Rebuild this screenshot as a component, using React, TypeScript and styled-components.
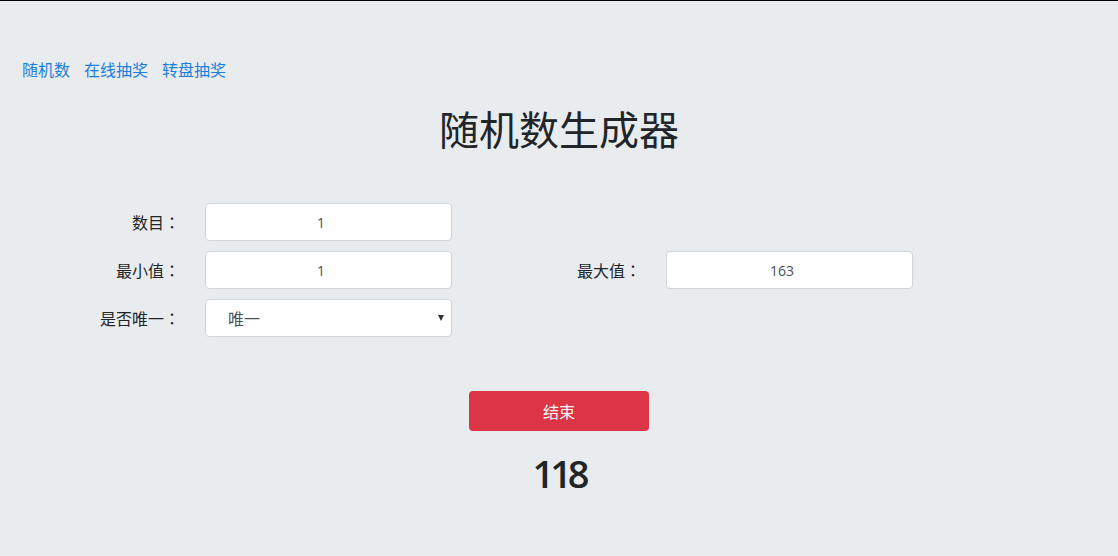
import React from "react";
import styled, { createGlobalStyle } from "styled-components";

const GlobalStyle = createGlobalStyle`
  html, body {
    margin: 0;
    padding: 0;
    background: #e9ecef;
  }
  body {
    font-family: "Open Sans", "Noto Sans CJK SC", sans-serif;
    color: #212529;
  }
  * { box-sizing: border-box; }
`;

const Page = styled.div`
  min-height: 556px;
  border-top: 1px solid #000;
  background: #e9ecef;
`;

const Nav = styled.nav`
  display: flex;
  gap: 14px;
  padding: 56px 0 0 22px;
`;

const NavLink = styled.a`
  font-family: "Noto Sans CJK SC", sans-serif;
  font-size: 16px;
  line-height: 24px;
  color: #1a7ee0;
  text-decoration: none;
  cursor: pointer;
`;

const Title = styled.h1`
  margin: 23px 0 0;
  text-align: center;
  font-family: "Noto Sans CJK SC", sans-serif;
  font-weight: 400;
  font-size: 40px;
  line-height: 48px;
  color: #212529;
`;

const Form = styled.div`
  margin-top: 51px;
  padding-left: 5px;
  display: grid;
  grid-template-columns: 175px 247px 164px 247px;
  column-gap: 25px;
  row-gap: 10px;
  align-items: center;
`;

const Label = styled.label<{ $col?: number }>`
  grid-column: ${(p) => p.$col ?? 1};
  text-align: right;
  font-family: "Noto Sans CJK SC", sans-serif;
  font-size: 16px;
  line-height: 24px;
  color: #212529;
`;

const Colon = styled.span`
  font-family: "Noto Sans CJK TC", sans-serif;
`;

const Input = styled.input`
  width: 100%;
  height: 38px;
  border: 1px solid #ced4da;
  border-radius: 4px;
  background: #fff;
  padding: 0 27px 0 12px;
  text-align: center;
  font-family: "Open Sans", "Noto Sans CJK SC", sans-serif;
  font-size: 14px;
  color: #495057;
  outline: none;
`;

const SelectWrap = styled.div`
  position: relative;
  width: 100%;
  &::after {
    content: "";
    position: absolute;
    right: 8px;
    top: 16px;
    border-left: 3px solid transparent;
    border-right: 3px solid transparent;
    border-top: 6px solid #333;
    pointer-events: none;
  }
`;

const Select = styled.select`
  width: 100%;
  height: 38px;
  appearance: none;
  -webkit-appearance: none;
  border: 1px solid #ced4da;
  border-radius: 4px;
  background: #fff;
  padding: 0 20px 0 22px;
  font-family: "Noto Sans CJK SC", sans-serif;
  font-size: 16px;
  color: #495057;
  outline: none;
`;

const Actions = styled.div`
  margin-top: 54px;
  display: flex;
  flex-direction: column;
  align-items: center;
`;

const Button = styled.button`
  width: 180px;
  height: 40px;
  border: none;
  border-radius: 4px;
  background: #dc3545;
  color: #fff;
  font-family: "Noto Sans CJK SC", sans-serif;
  font-size: 16px;
  cursor: pointer;
`;

const Result = styled.div`
  margin-top: 18px;
  font-family: "Open Sans", sans-serif;
  font-weight: 600;
  font-size: 38px;
  line-height: 48px;
  letter-spacing: -4px;
  color: #212529;
`;

export default function App() {
  return (
    <>
      <GlobalStyle />
      <Page>
        <Nav>
          <NavLink>随机数</NavLink>
          <NavLink>在线抽奖</NavLink>
          <NavLink>转盘抽奖</NavLink>
        </Nav>
        <Title>随机数生成器</Title>
        <Form>
          <Label>数目<Colon>：</Colon></Label>
          <Input defaultValue="1" />
          <Label>最小值<Colon>：</Colon></Label>
          <Input defaultValue="1" />
          <Label $col={3}>最大值<Colon>：</Colon></Label>
          <Input defaultValue="163" />
          <Label>是否唯一<Colon>：</Colon></Label>
          <SelectWrap>
            <Select defaultValue="唯一">
              <option>唯一</option>
              <option>不唯一</option>
            </Select>
          </SelectWrap>
        </Form>
        <Actions>
          <Button>结束</Button>
          <Result>118</Result>
        </Actions>
      </Page>
    </>
  );
}
